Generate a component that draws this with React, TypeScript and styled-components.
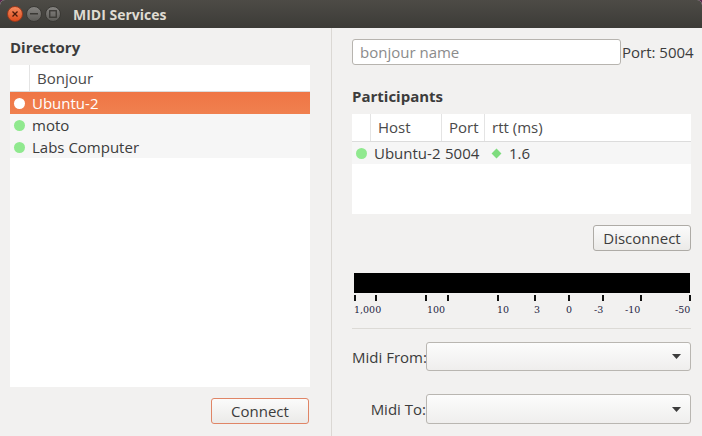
import React from 'react';
import styled, { createGlobalStyle } from 'styled-components';

const GlobalStyle = createGlobalStyle`
  html, body {
    margin: 0;
    padding: 0;
    background: #5a2a4e;
  }
  body {
    font-family: 'Open Sans', 'DejaVu Sans', sans-serif;
    font-size: 15px;
    color: #3c3c3c;
  }
`;

const Window = styled.div`
  width: 702px;
  height: 436px;
  display: flex;
  flex-direction: column;
  overflow: hidden;
  border-radius: 5px 5px 0 0;
  background: #f2f1f0;
`;

const TitleBar = styled.div`
  height: 28px;
  flex: none;
  display: flex;
  align-items: center;
  padding-left: 7px;
  background: linear-gradient(#4d4b46, #3c3b37);
`;

const WinButton = styled.div<{ $kind: 'close' | 'min' | 'max' }>`
  width: 16px;
  height: 16px;
  border-radius: 50%;
  margin-right: 3px;
  display: flex;
  align-items: center;
  justify-content: center;
  box-sizing: border-box;
  border: 1px solid ${(p) => (p.$kind === 'close' ? '#9e3a1c' : '#3a3935')};
  background: ${(p) =>
    p.$kind === 'close'
      ? 'linear-gradient(#f58a5e, #df4d1d)'
      : 'linear-gradient(#858380, #5d5c58)'};
`;

const Title = styled.div`
  margin-left: 9px;
  font-weight: 700;
  font-size: 14px;
  color: #dfdbd2;
`;

const Body = styled.div`
  flex: 1;
  display: flex;
  min-height: 0;
`;

const LeftPane = styled.div`
  flex: none;
  width: 300px;
  padding: 9px 21px 12px 10px;
  border-right: 1px solid #dbd8d4;
  display: flex;
  flex-direction: column;
`;

const RightPane = styled.div`
  flex: 1;
  min-width: 0;
  padding: 0 11px 12px 20px;
  display: flex;
  flex-direction: column;
`;

const SectionLabel = styled.div<{ $top?: number }>`
  font-weight: 700;
  height: 20px;
  line-height: 20px;
  margin-top: ${(p) => p.$top ?? 0}px;
`;

const ListBox = styled.div`
  flex: 1;
  margin-top: 8px;
  background: #ffffff;
  display: flex;
  flex-direction: column;
`;

const HeaderRow = styled.div`
  height: 26px;
  display: flex;
  border-bottom: 1px solid #dcdcdc;
  flex: none;
`;

const HeaderCell = styled.div<{ $w?: number }>`
  ${(p) => (p.$w ? `width: ${p.$w}px; flex: none;` : 'flex: 1;')}
  border-left: 1px solid #e4e4e4;
  padding-left: 7px;
  line-height: 26px;
  color: #4a4a4a;
  white-space: nowrap;
  box-sizing: border-box;
  &:first-child {
    border-left: none;
  }
`;

const Row = styled.div<{ $selected?: boolean }>`
  height: 22px;
  display: flex;
  align-items: center;
  background: ${(p) => (p.$selected ? 'linear-gradient(#ef7545, #f0804f)' : '#f6f6f6')};
  color: ${(p) => (p.$selected ? '#ffffff' : '#3c3c3c')};
  white-space: nowrap;
`;

const Dot = styled.span<{ $light?: boolean }>`
  width: 11px;
  height: 11px;
  border-radius: 50%;
  flex: none;
  background: ${(p) => (p.$light ? '#ffffff' : '#90e98f')};
  margin: 0 7px 0 4px;
`;

const Cell = styled.div<{ $w?: number }>`
  ${(p) => (p.$w ? `width: ${p.$w}px; flex: none;` : 'flex: 1;')}
  display: flex;
  align-items: center;
  white-space: nowrap;
`;

const Diamond = styled.span`
  width: 7px;
  height: 7px;
  background: #7edc7e;
  transform: rotate(45deg);
  margin: 0 9px 0 6px;
`;

const ButtonRow = styled.div<{ $top: number }>`
  display: flex;
  justify-content: flex-end;
  margin-top: ${(p) => p.$top}px;
`;

const PushButton = styled.button<{ $focus?: boolean; $w: number }>`
  width: ${(p) => p.$w}px;
  height: 26px;
  font: inherit;
  color: #3c3c3c;
  border-radius: 3px;
  border: 1px solid ${(p) => (p.$focus ? '#e08566' : '#aeaba6')};
  background: linear-gradient(#fbfbfb, #ebeae8);
  padding: 0;
`;

const TopRow = styled.div`
  display: flex;
  align-items: center;
  margin-top: 11px;
  height: 26px;
`;

const NameInput = styled.input`
  width: 269px;
  height: 26px;
  flex: none;
  box-sizing: border-box;
  border: 1px solid #b7b4af;
  border-radius: 3px;
  background: #ffffff;
  font: inherit;
  padding: 0 7px;
  color: #3c3c3c;
  &::placeholder {
    color: #8b8b8b;
  }
`;

const PortLabel = styled.span`
  margin-left: 1px;
  white-space: nowrap;
`;

const Table = styled.div`
  height: 100px;
  margin-top: 8px;
  background: #ffffff;
  display: flex;
  flex-direction: column;
  flex: none;
`;

const Meter = styled.svg`
  display: block;
  margin-top: 21px;
  flex: none;
`;

const Separator = styled.div`
  height: 1px;
  background: #dcdad6;
  margin-top: 12px;
  flex: none;
`;

const FormRow = styled.div<{ $top: number; $h: number }>`
  display: flex;
  align-items: center;
  margin-top: ${(p) => p.$top}px;
  height: ${(p) => p.$h}px;
`;

const FormLabel = styled.span`
  width: 74px;
  text-align: right;
  white-space: nowrap;
  flex: none;
`;

const Combo = styled.div`
  flex: 1;
  height: 100%;
  box-sizing: border-box;
  border: 1px solid #b9b6b1;
  border-radius: 3px;
  background: linear-gradient(#fcfcfc, #efeeed);
  display: flex;
  align-items: center;
  justify-content: flex-end;
  padding-right: 9px;
`;

const ticks = [2, 23, 73, 95, 145, 182, 216, 250, 288, 337];
const labels: [string, number][] = [
  ['1,000', 2],
  ['100', 75],
  ['10', 145],
  ['3', 182],
  ['0', 214],
  ['-3', 242],
  ['-10', 273],
  ['-50', 323],
];

const directory = [
  { name: 'Ubuntu-2', selected: true },
  { name: 'moto' },
  { name: 'Labs Computer' },
];

const Arrow = () => (
  <svg width="9" height="5" viewBox="0 0 9 5">
    <path d="M0 0 L9 0 L4.5 5 Z" fill="#3c3c3c" />
  </svg>
);

export default function App() {
  return (
    <>
      <GlobalStyle />
      <Window>
        <TitleBar>
          <WinButton $kind="close">
            <svg width="6" height="6" viewBox="0 0 6 6">
              <path d="M0.5 0.5 L5.5 5.5 M5.5 0.5 L0.5 5.5" stroke="#4a1a0a" strokeWidth="1.3" />
            </svg>
          </WinButton>
          <WinButton $kind="min">
            <svg width="8" height="2" viewBox="0 0 8 2">
              <rect width="8" height="1.5" fill="#3a3935" />
            </svg>
          </WinButton>
          <WinButton $kind="max">
            <svg width="8" height="8" viewBox="0 0 8 8">
              <rect x="0.75" y="0.75" width="6.5" height="6.5" fill="none" stroke="#3a3935" strokeWidth="1.3" />
            </svg>
          </WinButton>
          <Title>MIDI Services</Title>
        </TitleBar>
        <Body>
          <LeftPane>
            <SectionLabel>Directory</SectionLabel>
            <ListBox>
              <HeaderRow>
                <HeaderCell $w={19} />
                <HeaderCell>Bonjour</HeaderCell>
              </HeaderRow>
              {directory.map((d) => (
                <Row key={d.name} $selected={d.selected}>
                  <Dot $light={d.selected} />
                  {d.name}
                </Row>
              ))}
            </ListBox>
            <ButtonRow $top={11}>
              <PushButton $focus $w={98} style={{ marginRight: 1 }}>
                Connect
              </PushButton>
            </ButtonRow>
          </LeftPane>
          <RightPane>
            <TopRow>
              <NameInput placeholder="bonjour name" />
              <PortLabel>Port: 5004</PortLabel>
            </TopRow>
            <SectionLabel $top={21}>Participants</SectionLabel>
            <Table>
              <HeaderRow style={{ height: 27 }}>
                <HeaderCell $w={18} />
                <HeaderCell $w={71}>Host</HeaderCell>
                <HeaderCell $w={43}>Port</HeaderCell>
                <HeaderCell>rtt (ms)</HeaderCell>
              </HeaderRow>
              <Row>
                <Dot />
                <Cell $w={71}>Ubuntu-2</Cell>
                <Cell $w={42}>5004</Cell>
                <Cell>
                  <Diamond />
                  1.6
                </Cell>
              </Row>
            </Table>
            <ButtonRow $top={11}>
              <PushButton $w={98}>Disconnect</PushButton>
            </ButtonRow>
            <Meter width="339" height="44" viewBox="0 0 339 44">
              <rect x="2" y="1" width="336" height="20" fill="#000000" />
              {ticks.map((t) => (
                <rect key={t} x={t} y="23" width="2" height="6" fill="#111111" />
              ))}
              {labels.map(([text, x]) => (
                <text
                  key={text}
                  x={x}
                  y="41"
                  fontFamily="'DejaVu Serif', serif"
                  fontSize="9.5"
                  fill="#1e2442"
                >
                  {text}
                </text>
              ))}
            </Meter>
            <Separator />
            <FormRow $top={13} $h={29}>
              <FormLabel>Midi From:</FormLabel>
              <Combo>
                <Arrow />
              </Combo>
            </FormRow>
            <FormRow $top={23} $h={30}>
              <FormLabel>Midi To:</FormLabel>
              <Combo>
                <Arrow />
              </Combo>
            </FormRow>
          </RightPane>
        </Body>
      </Window>
    </>
  );
}
